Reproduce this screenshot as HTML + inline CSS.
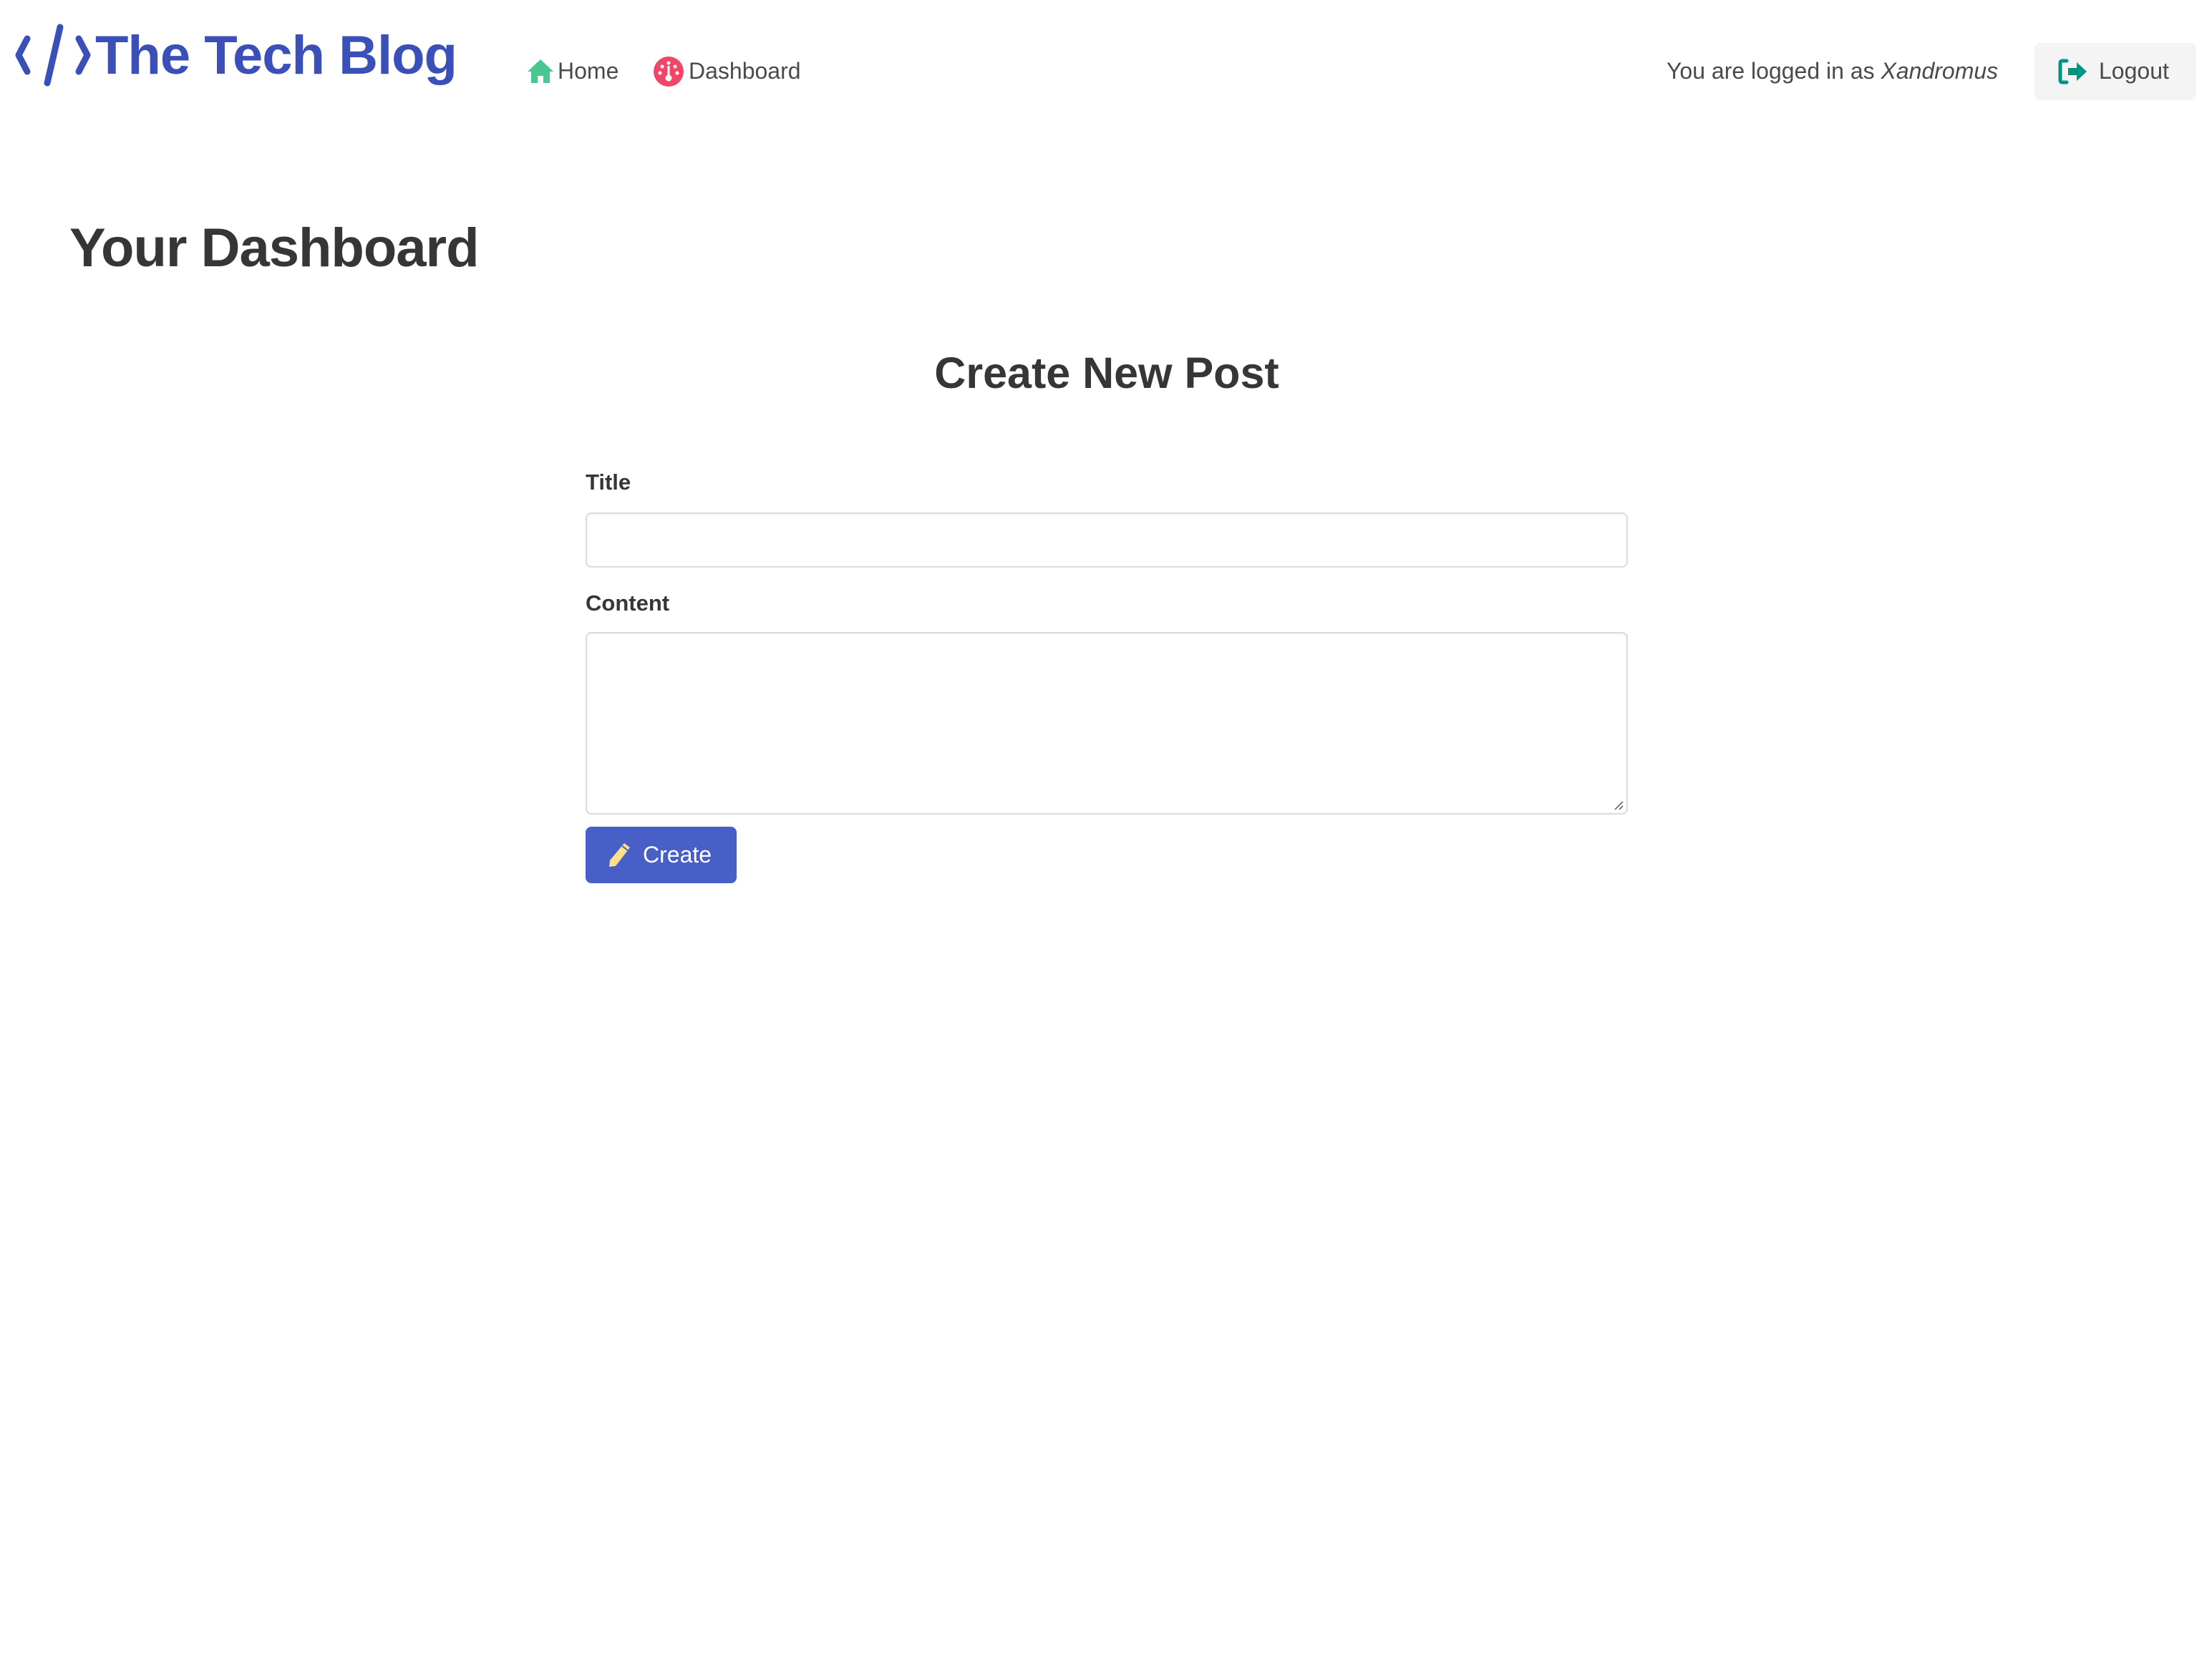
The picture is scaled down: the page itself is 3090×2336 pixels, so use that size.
<!DOCTYPE html>
<html><head><meta charset="utf-8"><style>
html,body{margin:0;padding:0;background:#fff;width:3090px;height:2336px;overflow:hidden}
body{font-family:"Liberation Sans",Arial,sans-serif;color:#4a4a4a;position:relative}
.a{position:absolute;white-space:nowrap}
</style></head><body>
<svg class="a" style="left:18px;top:32px" width="112" height="90" viewBox="0 0 112 90">
<g fill="none" stroke="#3a4fb8" stroke-width="9" stroke-linecap="round" stroke-linejoin="round">
<polyline points="20,22 8,45 20,68"/><line x1="66" y1="6" x2="48" y2="84"/><polyline points="92,22 104,45 92,68"/></g></svg>
<div class="a" style="left:133px;top:34px;font-size:76px;font-weight:bold;color:#3a4fb8;letter-spacing:-1px">The Tech Blog</div>
<svg class="a" style="left:737px;top:83px" width="36" height="33" viewBox="0 0 36 33"><path d="M18 0 L36 17 H31 V33 H22 V23 H14 V33 H5 V17 H0 Z" fill="#48c78e"/></svg>
<div class="a" style="left:779px;top:81px;font-size:32px">Home</div>
<svg class="a" style="left:913px;top:79px" width="42" height="42" viewBox="0 0 42 42"><circle cx="21" cy="21" r="21" fill="#f14668"/><g fill="#fff"><circle cx="21" cy="9" r="2.5"/><circle cx="12" cy="14" r="2.5"/><circle cx="30" cy="14" r="2.5"/><circle cx="9" cy="23" r="2.5"/><circle cx="33" cy="23" r="2.5"/><rect x="19.5" y="13" width="3" height="16"/><circle cx="21" cy="30" r="4.5"/></g></svg>
<div class="a" style="left:962px;top:81px;font-size:32px">Dashboard</div>
<div class="a" style="left:2328px;top:81px;font-size:32px">You are logged in as <i>Xandromus</i></div>
<div class="a" style="left:2842px;top:60px;width:226px;height:80px;background:#f4f4f4;border-radius:8px"></div>
<svg class="a" style="left:2875px;top:82px" width="42" height="36" viewBox="0 0 42 36"><path d="M12 3 H6 Q3 3 3 6 V30 Q3 33 6 33 H12" fill="none" stroke="#00947e" stroke-width="5" stroke-linecap="round"/><path d="M14 13 H26 V5 L40 18 L26 31 V23 H14 Z" fill="#00947e"/></svg>
<div class="a" style="left:2932px;top:81px;font-size:32px">Logout</div>
<div class="a" style="left:97px;top:303px;font-size:76px;font-weight:bold;color:#363636;letter-spacing:-1px">Your Dashboard</div>
<div class="a" style="left:0;width:3092px;text-align:center;top:486px;font-size:61px;font-weight:bold;color:#363636">Create New Post</div>
<div class="a" style="left:818px;top:656px;font-size:31px;font-weight:bold;color:#363636">Title</div>
<div class="a" style="left:818px;top:716px;width:1452px;height:73px;border:2px solid #dbdbdb;border-radius:8px;box-shadow:inset 0 1px 3px rgba(10,10,10,.05)"></div>
<div class="a" style="left:818px;top:825px;font-size:31px;font-weight:bold;color:#363636">Content</div>
<div class="a" style="left:818px;top:883px;width:1452px;height:251px;border:2px solid #dbdbdb;border-radius:8px;box-shadow:inset 0 1px 3px rgba(10,10,10,.05)"></div>
<svg class="a" style="left:2254px;top:1118px" width="14" height="14"><path d="M2 13 L13 2 M8 13 L13 8" stroke="#555" stroke-width="1.5"/></svg>
<div class="a" style="left:818px;top:1155px;width:211px;height:79px;background:#485fc7;border-radius:8px"></div>
<svg class="a" style="left:848px;top:1176px" width="34" height="36" viewBox="0 0 34 36"><path d="M24 2 L32 8 L12 34 L3 35 L4 26 Z" fill="#ffe08a"/><path d="M21 6 L29 12" stroke="#485fc7" stroke-width="2"/></svg>
<div class="a" style="left:898px;top:1176px;font-size:32px;color:#fff">Create</div>
</body></html>
